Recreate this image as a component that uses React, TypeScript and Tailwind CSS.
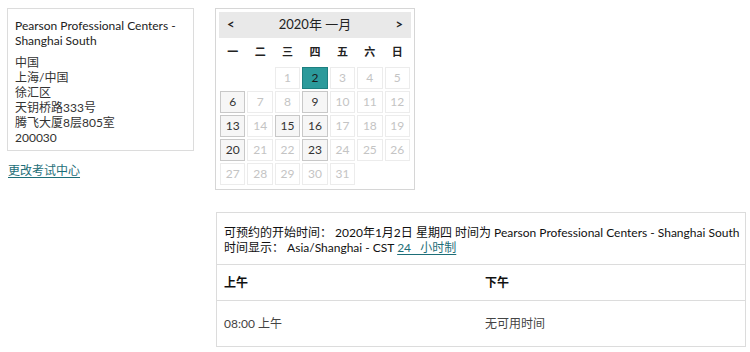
const FONT = { fontFamily: 'Lato, "Noto Sans CJK SC", sans-serif' };

const WEEKDAYS = ["一", "二", "三", "四", "五", "六", "日"];

// 0 = empty, positive = day number
const WEEKS: number[][] = [
  [0, 0, 1, 2, 3, 4, 5],
  [6, 7, 8, 9, 10, 11, 12],
  [13, 14, 15, 16, 17, 18, 19],
  [20, 21, 22, 23, 24, 25, 26],
  [27, 28, 29, 30, 31, 0, 0],
];

const AVAILABLE = new Set([6, 9, 13, 15, 16, 20, 23]);
const SELECTED = 2;

function DayCell({ day }: { day: number }) {
  if (!day) return <div className="h-[22px]" />;
  if (day === SELECTED) {
    return (
      <div className="flex h-[22px] items-center justify-center border border-[#1d7f80] bg-[#2b9a9b] text-[12px] text-[#1a1a1a]">
        {day}
      </div>
    );
  }
  if (AVAILABLE.has(day)) {
    return (
      <div className="flex h-[22px] items-center justify-center border border-[#c8c8c8] bg-[#f6f6f6] text-[12px] text-[#333]">
        {day}
      </div>
    );
  }
  return (
    <div className="flex h-[22px] items-center justify-center border border-[#ececec] bg-white text-[12px] text-[#c4c4c4]">
      {day}
    </div>
  );
}

function Calendar() {
  return (
    <div className="w-[200px] h-[182px] border border-[#d6d6d6] bg-white p-[3px]">
      <div className="flex h-[26px] items-center justify-between bg-[#e9e9e9] px-[8px] text-[13px] text-[#222]">
        <span className="font-bold">&lt;</span>
        <span>2020年 一月</span>
        <span className="font-bold">&gt;</span>
      </div>
      <div className="grid grid-cols-7 gap-x-[2px] px-[1px] pt-[3px]">
        {WEEKDAYS.map((w) => (
          <div key={w} className="flex h-[23px] items-center justify-center text-[11px] font-bold text-[#222]">
            {w}
          </div>
        ))}
      </div>
      <div className="grid grid-cols-7 gap-[2px] px-[1px] pt-[3px]">
        {WEEKS.flat().map((d, i) => (
          <DayCell key={i} day={d} />
        ))}
      </div>
    </div>
  );
}

export default function App() {
  return (
    <div className="flex h-[352px] w-[750px] bg-white text-[12px] text-[#222]" style={FONT}>
      <div className="ml-[7px] mt-[8px] w-[187px]">
        <div className="border border-[#dcdcdc] px-[7px] pb-[5px] pt-[9px] leading-[15px]">
          <div>Pearson Professional Centers - Shanghai South</div>
          <div className="mt-[7px] text-[#333]">
            <div>中国</div>
            <div>上海/中国</div>
            <div>徐汇区</div>
            <div>天钥桥路333号</div>
            <div>腾飞大厦8层805室</div>
            <div>200030</div>
          </div>
        </div>
        <a href="#" className="mt-[11px] block w-fit pl-[1px] text-[12px] text-[#1d6e78] underline underline-offset-2">
          更改考试中心
        </a>
      </div>

      <div className="ml-[21px] mt-[8px] flex flex-col">
        <Calendar />
        <div className="ml-[1px] mt-[22px] w-[530px] border border-[#dcdcdc]">
          <div className="border-b border-[#dcdcdc] px-[7px] pb-[9px] pt-[12px] leading-[15px] text-[#111]">
            <div className="whitespace-nowrap">可预约的开始时间： 2020年1月2日 星期四 时间为 Pearson Professional Centers - Shanghai South</div>
            <div>
              时间显示： Asia/Shanghai - CST{" "}
              <a href="#" className="text-[#1d6e78] underline underline-offset-2">
                24&nbsp;&nbsp;&nbsp;小时制
              </a>
            </div>
          </div>
          <div className="grid h-[36px] grid-cols-2 items-center border-b border-[#dcdcdc] px-[7px] font-bold text-[#111]">
            <div>上午</div>
            <div className="pl-[4px]">下午</div>
          </div>
          <div className="grid h-[45px] grid-cols-2 items-center px-[7px] text-[#444]">
            <div>08:00 上午</div>
            <div className="pl-[4px]">无可用时间</div>
          </div>
        </div>
      </div>
    </div>
  );
}
